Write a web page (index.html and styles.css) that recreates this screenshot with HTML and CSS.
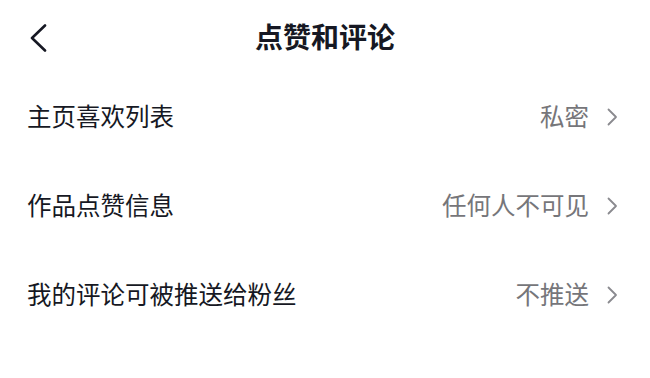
FILE: index.html
```html
<!DOCTYPE html>
<html lang="zh-CN">
<head>
<meta charset="utf-8">
<title>点赞和评论</title>
<link rel="stylesheet" href="styles.css">
</head>
<body>
<div class="page">
  <header class="header">
    <span class="back">
      <svg width="18" height="28" viewBox="0 0 18 28"><path d="M16 1.5 L3 14 L16 26.5" fill="none" stroke="#161823" stroke-width="2.6" stroke-linecap="round" stroke-linejoin="round"/></svg>
    </span>
    <h1 class="title">点赞和评论</h1>
  </header>
  <ul class="list">
    <li class="row"><span class="label">主页喜欢列表</span><span class="value">私密</span><span class="chev"><svg width="11" height="18" viewBox="0 0 11 18"><path d="M1.5 1.5 L9 9 L1.5 16.5" fill="none" stroke="#8a8a8f" stroke-width="1.8" stroke-linecap="round" stroke-linejoin="round"/></svg></span></li>
    <li class="row"><span class="label">作品点赞信息</span><span class="value">任何人不可见</span><span class="chev"><svg width="11" height="18" viewBox="0 0 11 18"><path d="M1.5 1.5 L9 9 L1.5 16.5" fill="none" stroke="#8a8a8f" stroke-width="1.8" stroke-linecap="round" stroke-linejoin="round"/></svg></span></li>
    <li class="row"><span class="label">我的评论可被推送给粉丝</span><span class="value">不推送</span><span class="chev"><svg width="11" height="18" viewBox="0 0 11 18"><path d="M1.5 1.5 L9 9 L1.5 16.5" fill="none" stroke="#8a8a8f" stroke-width="1.8" stroke-linecap="round" stroke-linejoin="round"/></svg></span></li>
  </ul>
</div>
</body>
</html>
```
FILE: styles.css
```css
* { box-sizing: border-box; }
html, body { margin: 0; padding: 0; background: #ffffff; }
body {
  font-family: "Noto Sans CJK SC", "Noto Sans", sans-serif;
  color: #161823;
  width: 650px;
  height: 378px;
  overflow: hidden;
}
.header {
  position: relative;
  height: 72px;
  display: flex;
  align-items: center;
  justify-content: center;
}
.back {
  position: absolute;
  left: 29px;
  top: 24px;
  display: flex;
}
.title {
  margin: 0;
  font-size: 28px;
  font-weight: 700;
  line-height: 1;
  color: #161823;
}
.list {
  list-style: none;
  margin: 0;
  padding: 0;
}
.row {
  height: 89px;
  display: flex;
  align-items: center;
  padding: 0 32px 0 27px;
}
.label {
  flex: 1;
  font-size: 24.5px;
  line-height: 1;
  color: #161823;
}
.value {
  font-size: 24.5px;
  line-height: 1;
  color: #76767a;
  margin-right: 18px;
}
.chev {
  display: flex;
}
```
